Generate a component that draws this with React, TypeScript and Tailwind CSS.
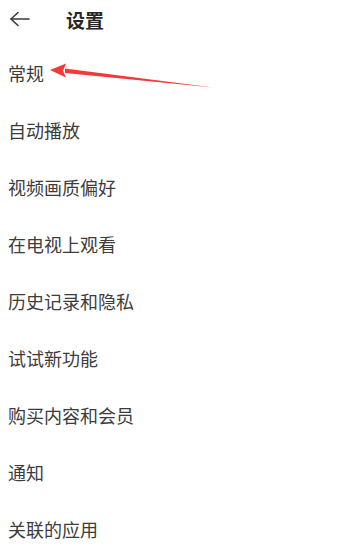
const items = [
  "常规",
  "自动播放",
  "视频画质偏好",
  "在电视上观看",
  "历史记录和隐私",
  "试试新功能",
  "购买内容和会员",
  "通知",
  "关联的应用",
];

function BackArrow() {
  return (
    <svg width="20" height="16" viewBox="0 0 20 16" fill="none" stroke="#3a3a3a" strokeWidth="1.6" strokeLinecap="round" strokeLinejoin="round">
      <path d="M1 8h18" />
      <path d="M8 1.5 1 8l7 6.5" />
    </svg>
  );
}

export default function App() {
  return (
    <div
      className="relative w-[350px] h-[546px] overflow-hidden bg-white"
      style={{ fontFamily: '"Noto Sans CJK SC", "Noto Sans", sans-serif' }}
    >
      <div className="flex items-center h-[38px]">
        <div className="w-[66px] pl-[10px] flex items-center">
          <BackArrow />
        </div>
        <h1 className="text-[19px] font-bold text-[#262626] leading-none">设置</h1>
      </div>

      <ul className="pt-[6px]">
        {items.map((label) => (
          <li key={label} className="h-[57px] flex items-center pl-[8px]">
            <span className="text-[18px] leading-none text-[#3c3c3c]">{label}</span>
          </li>
        ))}
      </ul>

      {/* red pointer arrow */}
      <svg
        className="absolute left-0 top-0 pointer-events-none"
        width="350"
        height="120"
        viewBox="0 0 350 120"
      >
        <polygon points="65,68.5 213,87.5 65,73" fill="#f23a3a" />
        <polygon points="50,70 66,63.5 63,70.8 66,77.5" fill="#f23a3a" />
      </svg>
    </div>
  );
}
